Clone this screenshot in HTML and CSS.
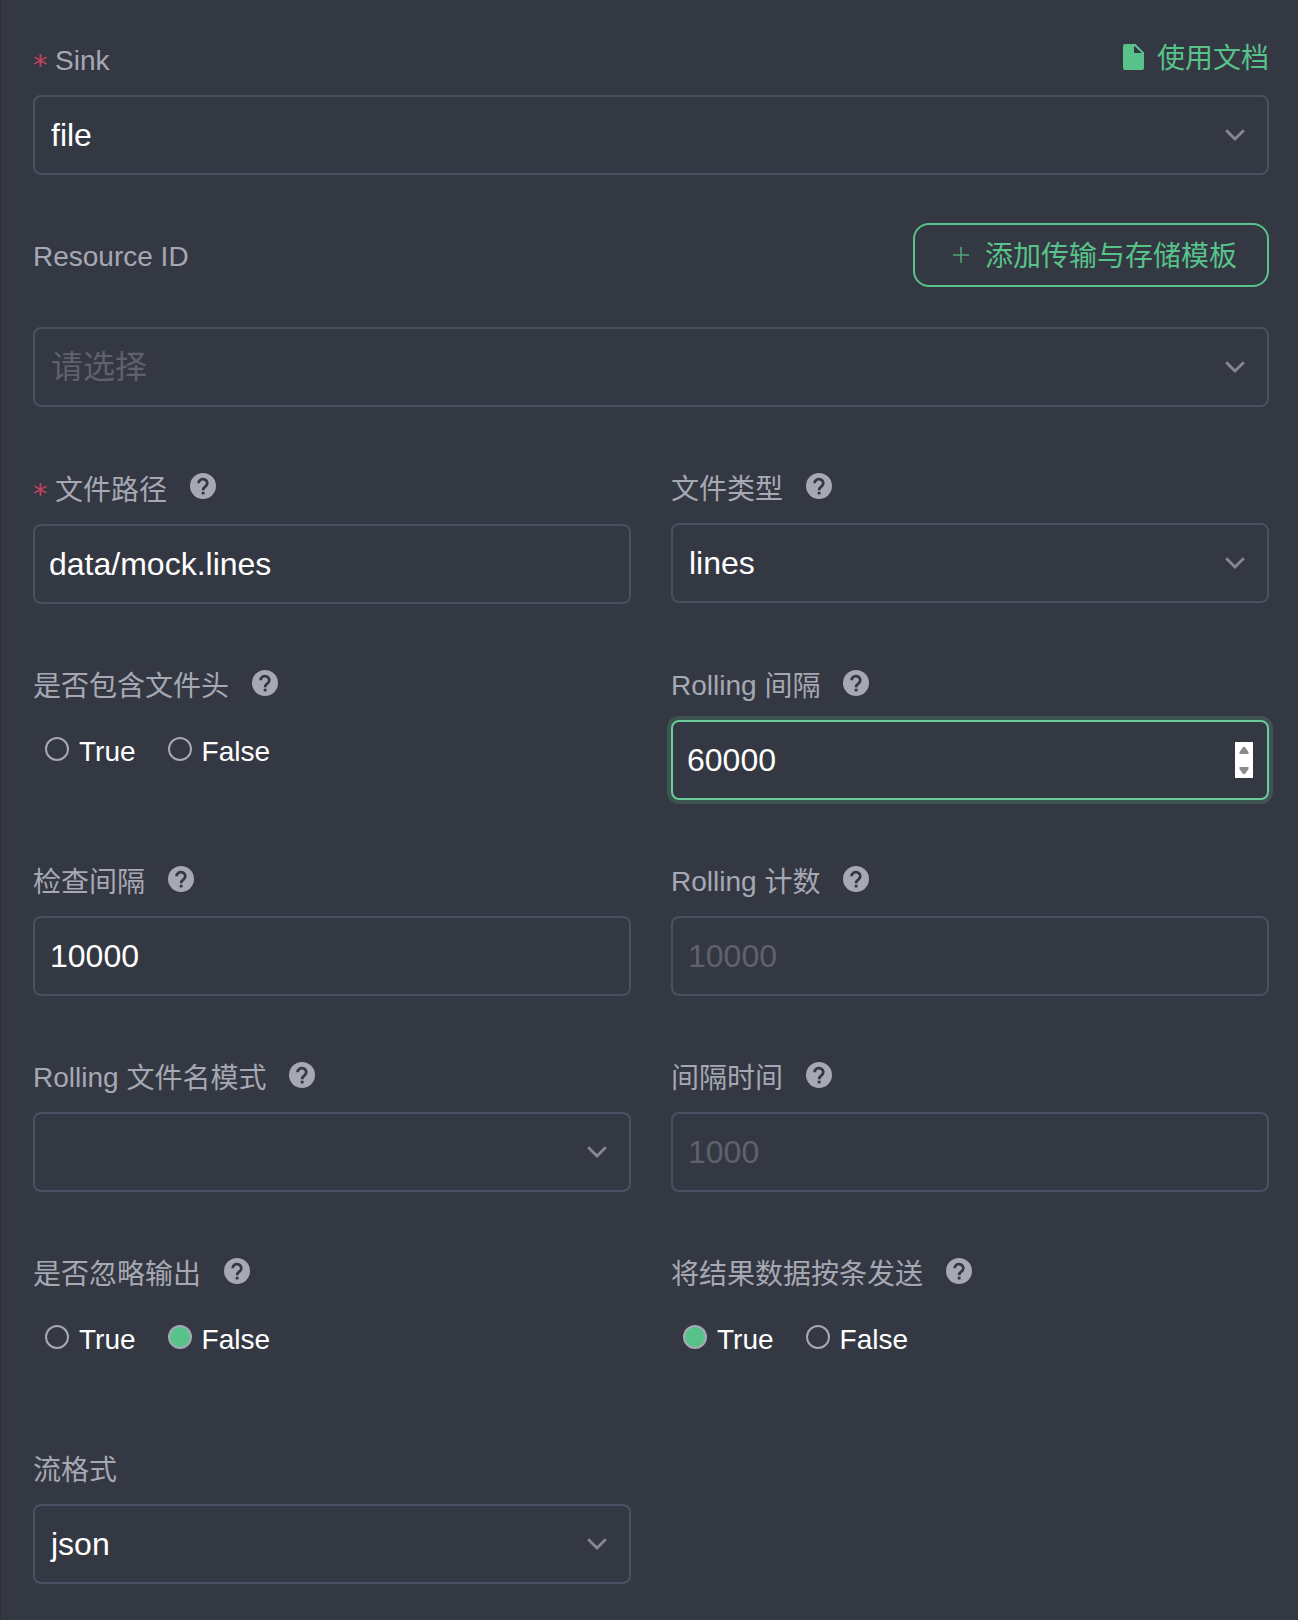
FILE: index.html
```html
<!DOCTYPE html>
<html lang="zh-CN">
<head>
<meta charset="utf-8">
<title>Sink</title>
<link rel="stylesheet" href="styles.css">
</head>
<body>
<svg class="symbols" width="0" height="0">
  <symbol id="chevron" viewBox="0 0 20 12"><path d="M1.2 1.2 10 10 18.8 1.2" fill="none" stroke="currentColor" stroke-width="2.7"/></symbol>
  <symbol id="help" viewBox="2 2 20 20"><circle cx="12" cy="12" r="10" fill="currentColor"/><path d="M8.7 9.9a3.3 3.15 0 1 1 5.3 2.4c-1.2.9-1.9 1.4-1.9 2.9" fill="none" stroke="#343842" stroke-width="2.1"/><path fill="#343842" d="M11 16.4h2.2v2.1H11z"/></symbol>
</svg>
<form class="form">
  <section class="item">
    <div class="head">
      <div class="label"><span class="required">*</span>Sink</div>
      <a class="doc"><svg width="21" height="26" viewBox="0 0 21 26"><path fill="currentColor" fill-rule="evenodd" d="M2 0H12.5L21 8.5V24a2 2 0 0 1-2 2H2a2 2 0 0 1-2-2V2A2 2 0 0 1 2 0ZM11 1.8V9h8Z"/></svg>使用文档</a>
    </div>
    <div class="field select">file<svg class="chevron"><use href="#chevron"/></svg></div>
  </section>

  <section class="item resource">
    <div class="head">
      <div class="label">Resource ID</div>
      <button type="button" class="add"><svg width="16" height="16" viewBox="0 0 16 16"><path d="M8 0V16M0 8H16" stroke="currentColor" stroke-width="1.6"/></svg><span>添加传输与存储模板</span></button>
    </div>
    <div class="field select placeholder">请选择<svg class="chevron"><use href="#chevron"/></svg></div>
  </section>

  <div class="grid">
    <section class="item lowered">
      <div class="head"><div class="label"><span class="required">*</span><span class="zh">文件路径</span><svg class="help"><use href="#help"/></svg></div></div>
      <div class="field">data/mock.lines</div>
    </section>
    <section class="item">
      <div class="head"><div class="label"><span class="zh">文件类型</span><svg class="help"><use href="#help"/></svg></div></div>
      <div class="field select">lines<svg class="chevron"><use href="#chevron"/></svg></div>
    </section>

    <section class="item">
      <div class="head"><div class="label"><span class="zh">是否包含文件头</span><svg class="help"><use href="#help"/></svg></div></div>
      <div class="radios">
        <label class="radio"><i class="dot"></i><span>True</span></label>
        <label class="radio"><i class="dot"></i><span>False</span></label>
      </div>
    </section>
    <section class="item">
      <div class="head"><div class="label"><span>Rolling </span><span class="zh">间隔</span><svg class="help"><use href="#help"/></svg></div></div>
      <div class="field focused">60000<svg class="spinner" viewBox="0 0 18 36"><path fill="#fff" d="M0 0H18V36H0z"/><path fill="#8b8b8b" d="M8 5h2l3.5 5v2h-9v-2zM8 32h2l3.5-5v-2h-9v2z"/></svg></div>
    </section>

    <section class="item">
      <div class="head"><div class="label"><span class="zh">检查间隔</span><svg class="help"><use href="#help"/></svg></div></div>
      <div class="field number">10000</div>
    </section>
    <section class="item">
      <div class="head"><div class="label"><span>Rolling </span><span class="zh">计数</span><svg class="help"><use href="#help"/></svg></div></div>
      <div class="field number placeholder">10000</div>
    </section>

    <section class="item">
      <div class="head"><div class="label"><span>Rolling </span><span class="zh">文件名模式</span><svg class="help"><use href="#help"/></svg></div></div>
      <div class="field select"><svg class="chevron"><use href="#chevron"/></svg></div>
    </section>
    <section class="item">
      <div class="head"><div class="label"><span class="zh">间隔时间</span><svg class="help"><use href="#help"/></svg></div></div>
      <div class="field number placeholder">1000</div>
    </section>

    <section class="item">
      <div class="head"><div class="label"><span class="zh">是否忽略输出</span><svg class="help"><use href="#help"/></svg></div></div>
      <div class="radios">
        <label class="radio"><i class="dot"></i><span>True</span></label>
        <label class="radio"><i class="dot checked"></i><span>False</span></label>
      </div>
    </section>
    <section class="item">
      <div class="head"><div class="label"><span class="zh">将结果数据按条发送</span><svg class="help"><use href="#help"/></svg></div></div>
      <div class="radios">
        <label class="radio"><i class="dot checked"></i><span>True</span></label>
        <label class="radio"><i class="dot"></i><span>False</span></label>
      </div>
    </section>

    <section class="item">
      <div class="head"><div class="label"><span class="zh">流格式</span></div></div>
      <div class="field select">json<svg class="chevron"><use href="#chevron"/></svg></div>
    </section>
  </div>
</form>
</body>
</html>
```
FILE: styles.css
```css
* {
  box-sizing: border-box;
}

body {
  margin: 0;
  background: #343842;
  color: #fff;
  font-family: "Liberation Sans", "Noto Sans CJK SC", sans-serif;
}

.symbols {
  display: block;
}

.form {
  height: 1620px;
  padding: 31px 29px 0 32px;
  border-left: 1px solid #303135;
  overflow: hidden;
}

.head {
  display: flex;
  justify-content: space-between;
  height: 64px;
}

.label {
  display: flex;
  height: 40px;
  margin-top: 10px;
  color: #a6a8b4;
  font-size: 28px;
  line-height: 40px;
  white-space: pre;
}

.zh {
  padding-top: 1px;
}

.required {
  width: 22px;
  color: #c4425f;
  font-family: "DejaVu Sans", sans-serif;
  font-size: 29px;
  line-height: 48px;
}

.help {
  width: 26px;
  height: 26px;
  margin: 4px 0 0 23px;
}

.doc {
  display: flex;
  gap: 13px;
  height: 40px;
  margin-top: 8px;
  color: #57c38a;
  font-size: 28px;
  line-height: 40px;
}

.doc svg {
  margin-top: 5px;
}

.field {
  display: flex;
  align-items: center;
  height: 80px;
  padding: 0 14px;
  border: 2px solid #495062;
  border-radius: 8px;
  font-size: 32px;
  line-height: 40px;
}

.select {
  padding: 0 22px 0 16px;
}

.number {
  padding-left: 15px;
}

.placeholder {
  color: #5f616d;
}

.focused {
  border-color: #6ccb9c;
  box-shadow: 0 0 0 4px #3d5450;
}

.chevron {
  width: 20px;
  height: 12px;
  margin-left: auto;
  color: #868894;
}

.spinner {
  width: 18px;
  height: 36px;
  margin-left: auto;
}

.resource {
  margin-top: 48px;
}

.resource .head {
  height: 104px;
}

.resource .label {
  margin-top: 14px;
}

.add {
  display: flex;
  align-items: center;
  gap: 16px;
  width: 356px;
  height: 64px;
  padding: 0 0 0 38px;
  border: 2px solid #57c38a;
  border-radius: 16px;
  background: none;
  color: #57c38a;
  font: inherit;
  font-size: 28px;
  line-height: 40px;
}

.add svg {
  opacity: .8;
}

.add span {
  padding-top: 3px;
}

.grid {
  display: grid;
  grid-template-columns: 598px 598px;
  grid-template-rows: 197px;
  grid-auto-rows: 196px;
  column-gap: 40px;
  margin-top: 52px;
}

.lowered {
  margin-top: 1px;
}

.lowered .help {
  margin-top: 3px;
}

.radios {
  display: flex;
  gap: 32px;
  padding-left: 12px;
}

.radio {
  display: flex;
  gap: 10px;
  font-size: 28px;
  line-height: 40px;
}

.radio span {
  margin-top: 12px;
}

.dot {
  width: 24px;
  height: 24px;
  margin-top: 17px;
  border: 2px solid #a6a8b4;
  border-radius: 50%;
}

.checked {
  background: #57c38a;
}
```
